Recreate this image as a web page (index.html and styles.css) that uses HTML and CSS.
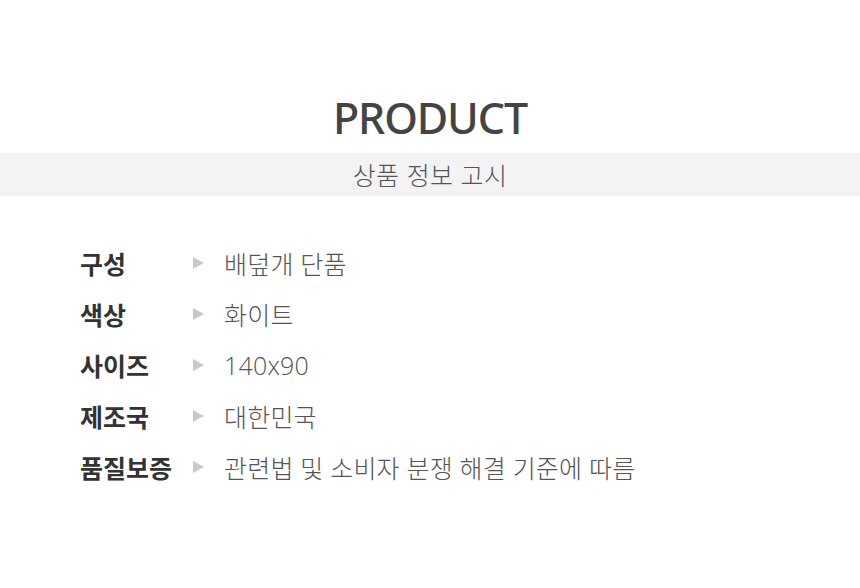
FILE: index.html
```html
<!DOCTYPE html>
<html lang="ko">
<head>
<meta charset="utf-8">
<link rel="stylesheet" href="styles.css">
</head>
<body>
<div class="page">
  <h1 class="title">PRODUCT</h1>
  <div class="band">상품 정보 고시</div>
  <div class="list">
    <div class="row"><span class="label">구성</span><span class="arrow"></span><span class="value">배덮개 단품</span></div>
    <div class="row"><span class="label">색상</span><span class="arrow"></span><span class="value">화이트</span></div>
    <div class="row"><span class="label">사이즈</span><span class="arrow"></span><span class="value">140x90</span></div>
    <div class="row"><span class="label">제조국</span><span class="arrow"></span><span class="value">대한민국</span></div>
    <div class="row"><span class="label">품질보증</span><span class="arrow"></span><span class="value">관련법 및 소비자 분쟁 해결 기준에 따름</span></div>
  </div>
</div>
</body>
</html>
```
FILE: styles.css
```css
html, body { margin: 0; padding: 0; background: #fff; }
.page {
  width: 860px;
  height: 588px;
  font-family: "Noto Sans CJK KR", "Noto Sans", sans-serif;
  padding-top: 92px;
  box-sizing: border-box;
}
.title {
  margin: 0;
  text-align: center;
  font-family: "Noto Sans", "Noto Sans CJK KR", sans-serif;
  font-weight: 500;
  font-size: 43px;
  line-height: 52px;
  color: #444;
  letter-spacing: -1.1px;
}
.band {
  margin-top: 9px;
  height: 43px;
  background: #f3f3f3;
  text-align: center;
  font-size: 25px;
  line-height: 43px;
  color: #555;
  font-weight: 300;
  letter-spacing: 0.3px;
}
.list {
  margin-top: 41px;
  padding-left: 80px;
  display: flex;
  flex-direction: column;
}
.row {
  display: flex;
  align-items: center;
  height: 51px;
}
.label {
  width: 113px;
  font-size: 25px;
  font-weight: 700;
  color: #333;
}
.arrow {
  width: 0;
  height: 0;
  border-top: 6px solid transparent;
  border-bottom: 6px solid transparent;
  border-left: 11px solid #c8c8c8;
  margin-right: 20px;
}
.value {
  font-family: "Open Sans", "Noto Sans CJK KR", sans-serif;
  font-size: 25px;
  font-weight: 300;
  color: #555;
  letter-spacing: 0.2px;
}
```
